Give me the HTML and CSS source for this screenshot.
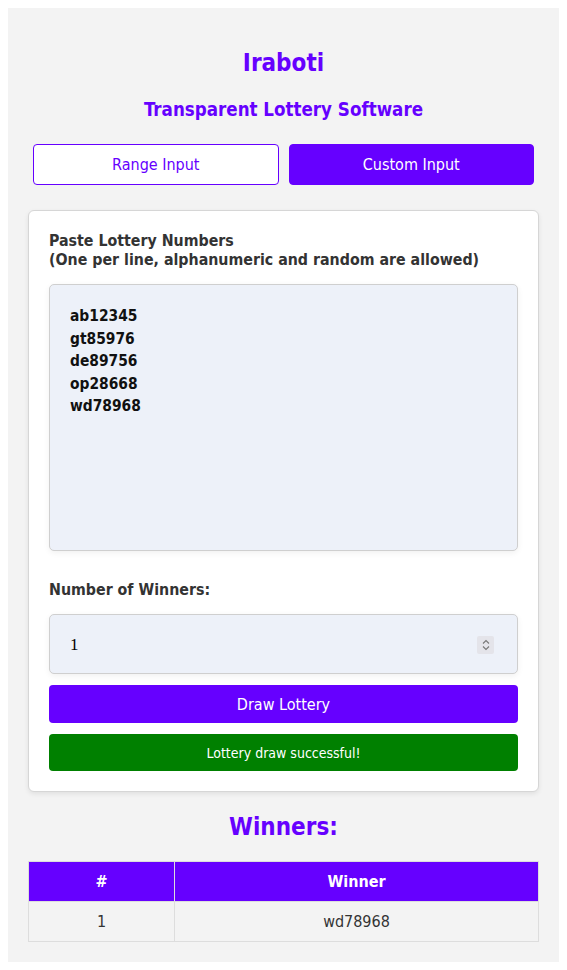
FILE: index.html
```html
<!DOCTYPE html>
<html lang="en">
<head>
<meta charset="utf-8">
<title>Iraboti</title>
<link rel="stylesheet" href="styles.css">
</head>
<body>
<div class="app">
  <h1 class="title">Iraboti</h1>
  <h2 class="subtitle">Transparent Lottery Software</h2>
  <div class="tabs">
    <button class="tab tab-outline">Range Input</button>
    <button class="tab tab-solid">Custom Input</button>
  </div>
  <div class="card">
    <label class="label">Paste Lottery Numbers<br>(One per line, alphanumeric and random are allowed)</label>
    <textarea class="numbers">ab12345
gt85976
de89756
op28668
wd78968</textarea>
    <label class="label label-winners">Number of Winners:</label>
    <div class="num-input">
      <span class="num-value">1</span>
      <span class="spinner">
        <svg width="10" height="14" viewBox="0 0 10 14"><path d="M2 5.5 L5 2.5 L8 5.5" fill="none" stroke="#777" stroke-width="1.1"/><path d="M2 8.5 L5 11.5 L8 8.5" fill="none" stroke="#777" stroke-width="1.1"/></svg>
      </span>
    </div>
    <button class="draw">Draw Lottery</button>
    <div class="success">Lottery draw successful!</div>
  </div>
  <h2 class="winners-title">Winners:</h2>
  <table class="winners">
    <thead>
      <tr><th class="col-num">#</th><th>Winner</th></tr>
    </thead>
    <tbody>
      <tr><td>1</td><td>wd78968</td></tr>
    </tbody>
  </table>
</div>
</body>
</html>
```
FILE: styles.css
```css
* { box-sizing: border-box; }
body {
  margin: 8px;
  background: #fff;
  font-family: "DejaVu Sans", Verdana, sans-serif;
  font-stretch: semi-condensed;
  color: #333;
}
.app {
  background: #f3f3f3;
  padding: 20px;
}
.title {
  margin: 20px 0 0;
  text-align: center;
  color: #6600ff;
  font-size: 24px;
  line-height: 30px;
  font-weight: bold;
}
.subtitle {
  margin: 20px 0 0;
  text-align: center;
  color: #6600ff;
  font-size: 18.6px;
  line-height: 23px;
  font-weight: bold;
}
.tabs {
  display: flex;
  gap: 10px;
  padding: 0 5px;
  margin-top: 23px;
}
.tab {
  flex: 1;
  height: 41px;
  border-radius: 4px;
  font-family: inherit;
  font-stretch: semi-condensed;
  font-size: 16px;
  cursor: pointer;
}
.tab-outline {
  background: #fff;
  border: 1px solid #6600ff;
  color: #6600ff;
}
.tab-solid {
  background: #6600ff;
  border: 1px solid #6600ff;
  color: #fff;
}
.card {
  margin-top: 25px;
  background: #fff;
  border: 1px solid #d6d6d6;
  border-radius: 6px;
  padding: 20px;
  box-shadow: 0 2px 5px rgba(0,0,0,0.08);
  display: flex;
  flex-direction: column;
}
.label {
  display: block;
  font-size: 15.8px;
  line-height: 19px;
  font-weight: bold;
  color: #333;
}
.numbers {
  display: block;
  margin-top: 15px;
  width: 100%;
  height: 267px;
  padding: 20px;
  background: #edf1f9;
  border: 1px solid #cfcfcf;
  border-radius: 5px;
  box-shadow: 0 2px 6px rgba(0,0,0,0.06);
  font-family: "DejaVu Sans", Verdana, sans-serif;
  font-stretch: semi-condensed;
  font-weight: bold;
  font-size: 15.4px;
  line-height: 22.5px;
  color: #111;
  resize: none;
}
.label-winners {
  margin-top: 29px;
}
.num-input {
  margin-top: 15px;
  height: 60px;
  border: 1px solid #cfcfcf;
  border-radius: 5px;
  background: #edf1f9;
  box-shadow: 0 2px 6px rgba(0,0,0,0.06);
  display: flex;
  align-items: center;
  justify-content: space-between;
  padding: 1px 23px 0 20px;
}
.num-value {
  font-family: "Liberation Serif", serif;
  font-size: 17px;
  color: #000;
}
.spinner {
  width: 17px;
  height: 18px;
  background: #e4e4ea;
  border-radius: 2px;
  display: flex;
  align-items: center;
  justify-content: center;
}
.draw {
  margin-top: 11px;
  height: 38px;
  border: none;
  border-radius: 4px;
  background: #6600ff;
  color: #fff;
  font-family: inherit;
  font-stretch: semi-condensed;
  font-size: 16px;
}
.success {
  margin-top: 11px;
  height: 37px;
  border-radius: 4px;
  background: #008000;
  color: #fff;
  font-size: 14px;
  display: flex;
  align-items: center;
  justify-content: center;
}
.winners-title {
  margin: 20px 0 0;
  text-align: center;
  color: #6600ff;
  font-size: 24px;
  line-height: 30px;
  font-weight: bold;
}
.winners {
  margin-top: 19px;
  width: 100%;
  border-collapse: collapse;
}
.winners th, .winners td {
  border: 1px solid #dddddd;
  height: 40px;
  text-align: center;
  font-size: 16px;
}
.winners th {
  background: #6600ff;
  color: #fff;
  font-weight: bold;
}
.winners td {
  background: #f3f3f3;
  color: #333;
}
.col-num { width: 146px; }
```
